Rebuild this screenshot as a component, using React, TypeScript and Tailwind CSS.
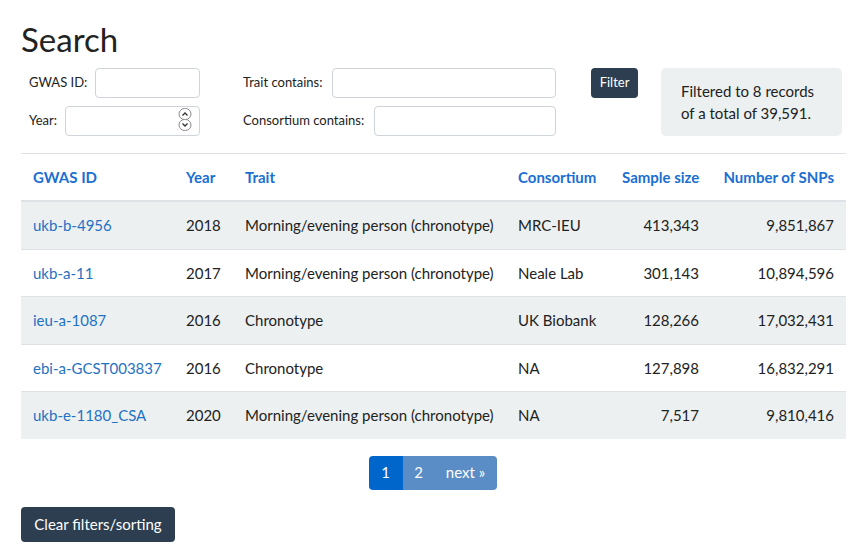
import React from "react";

const rows = [
  { id: "ukb-b-4956", year: "2018", trait: "Morning/evening person (chronotype)", cons: "MRC-IEU", n: "413,343", snps: "9,851,867" },
  { id: "ukb-a-11", year: "2017", trait: "Morning/evening person (chronotype)", cons: "Neale Lab", n: "301,143", snps: "10,894,596" },
  { id: "ieu-a-1087", year: "2016", trait: "Chronotype", cons: "UK Biobank", n: "128,266", snps: "17,032,431" },
  { id: "ebi-a-GCST003837", year: "2016", trait: "Chronotype", cons: "NA", n: "127,898", snps: "16,832,291" },
  { id: "ukb-e-1180_CSA", year: "2020", trait: "Morning/evening person (chronotype)", cons: "NA", n: "7,517", snps: "9,810,416" },
];

function Spinner() {
  return (
    <svg width="14" height="26" viewBox="0 0 14 26" className="absolute right-[8px] top-[1px]">
      <rect x="1" y="1.5" width="12" height="11" rx="5.5" fill="white" stroke="#8a8a8a" strokeWidth="1" />
      <rect x="1" y="12.5" width="12" height="11" rx="5.5" fill="white" stroke="#8a8a8a" strokeWidth="1" />
      <path d="M4.5 8.5 L7 6 L9.5 8.5" fill="none" stroke="#333" strokeWidth="1.3" />
      <path d="M4.5 16.5 L7 19 L9.5 16.5" fill="none" stroke="#333" strokeWidth="1.3" />
    </svg>
  );
}

const th = "px-[12px] py-[12px] leading-[22.5px] font-bold whitespace-nowrap";
const td = "px-[12px] py-[12px] leading-[22.5px] whitespace-nowrap";

export default function App() {
  return (
    <div className="w-[863px] h-[557px] bg-white text-[#222] overflow-hidden" style={{ fontFamily: "Lato, 'Noto Sans', sans-serif" }}>
      <div className="px-[21px]">
        <h1 className="text-[33px] leading-[1.2] font-normal pt-[20px] mb-[8px] text-[#222]">Search</h1>
        <div className="flex items-start">
          <div className="w-[179px] flex flex-col gap-[8px] pl-[8px]">
            <div className="flex items-center gap-[8px]">
              <label className="text-[13px] whitespace-nowrap">GWAS ID:</label>
              <input type="text" className="flex-1 min-w-0 h-[30px] border border-[#ced4da] rounded-[4px] px-2" />
            </div>
            <div className="flex items-center gap-[8px]">
              <label className="text-[13px] whitespace-nowrap">Year:</label>
              <div className="relative flex-1 min-w-0">
                <input type="text" className="w-full h-[30px] border border-[#ced4da] rounded-[4px] px-2" />
                <Spinner />
              </div>
            </div>
          </div>
          <div className="ml-[43px] w-[313px] flex flex-col gap-[8px]">
            <div className="flex items-center gap-[10px]">
              <label className="text-[13px] whitespace-nowrap">Trait contains:</label>
              <input type="text" className="flex-1 min-w-0 h-[30px] border border-[#ced4da] rounded-[4px] px-2" />
            </div>
            <div className="flex items-center gap-[10px]">
              <label className="text-[13px] whitespace-nowrap">Consortium contains:</label>
              <input type="text" className="flex-1 min-w-0 h-[30px] border border-[#ced4da] rounded-[4px] px-2" />
            </div>
          </div>
          <button className="ml-[35px] h-[30px] w-[48px] bg-[#2c3e50] text-white text-[13px] rounded-[4px]">Filter</button>
          <div className="ml-[23px] w-[184px] h-[68px] bg-[#ecf0f1] rounded-[5px] pl-[20px] pr-[20px] pt-[12px] text-[15px] leading-[22px]">
            Filtered to 8 records of a total of 39,591.
          </div>
        </div>

        <table className="mt-[17px] w-[825px] table-fixed border-collapse text-[15px]">
          <colgroup>
            <col className="w-[153px]" />
            <col className="w-[59px]" />
            <col className="w-[273px]" />
            <col className="w-[104px]" />
            <col className="w-[101px]" />
            <col className="w-[135px]" />
          </colgroup>
          <thead>
            <tr className="border-t border-[#dee2e6] border-b-2 border-b-[#dee2e6] text-[#1a6fd1]">
              <th className={th + " text-left"}>GWAS ID</th>
              <th className={th + " text-left"}>Year</th>
              <th className={th + " text-left"}>Trait</th>
              <th className={th + " text-left"}>Consortium</th>
              <th className={th + " text-right"}>Sample size</th>
              <th className={th + " text-right"}>Number of SNPs</th>
            </tr>
          </thead>
          <tbody>
            {rows.map((r, i) => (
              <tr key={r.id} className={(i % 2 === 0 ? "bg-[#ecf0f1] " : "bg-white ") + (i < rows.length - 1 ? "border-b border-[#dee2e6]" : "")}>
                <td className={td + " text-[#1f72c4]"}>{r.id}</td>
                <td className={td}>{r.year}</td>
                <td className={td}>{r.trait}</td>
                <td className={td}>{r.cons}</td>
                <td className={td + " text-right"}>{r.n}</td>
                <td className={td + " text-right"}>{r.snps}</td>
              </tr>
            ))}
          </tbody>
        </table>

        <div className="flex justify-center mt-[17px] pl-[2px]">
          <div className="flex h-[34px] rounded-[4px] overflow-hidden text-[15px] text-white">
            <span className="w-[34px] flex items-center justify-center bg-[#0066cc]">1</span>
            <span className="w-[32px] flex items-center justify-center bg-[#5a8dc5]">2</span>
            <span className="w-[62px] flex items-center justify-center bg-[#5a8dc5]">next »</span>
          </div>
        </div>

        <button className="mt-[17px] h-[35px] w-[154px] bg-[#2c3e50] text-white text-[15px] rounded-[4px]">Clear filters/sorting</button>
      </div>
    </div>
  );
}
